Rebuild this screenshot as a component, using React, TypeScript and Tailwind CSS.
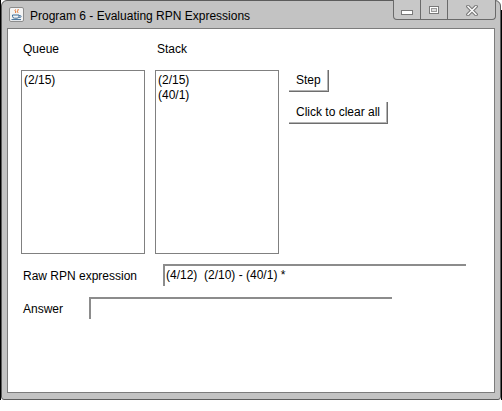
export default function App() {
  const font = { fontFamily: '"Liberation Sans", Arial, sans-serif' };
  return (
    <div className="w-[502px] h-[411px] bg-white flex text-black text-[12px] leading-[15px]" style={font}>
      {/* desktop edge */}
      <div className="w-px h-[400px] bg-black" />

      {/* window */}
      <div className="w-[500px] h-[400px] flex flex-col bg-[#c3c3c3] border border-[#5c5c5c] rounded-t-[6px] rounded-b-[3px]">
        {/* title bar */}
        <div className="h-[27px] flex items-start">
          <div className="ml-[7px] mt-[6px] w-[15px] h-[15px]">
            <svg width="15" height="15" viewBox="0 0 15 15">
              <rect x="0.5" y="0.5" width="14" height="14" rx="1.5" fill="#f4f4f4" stroke="#8c8c8c" />
              <path d="M6.5 2.5c-1.5 1.2 1.2 1.8 0 3.4" stroke="#e2661b" strokeWidth="1" fill="none" />
              <path d="M8.8 2c1.6 1-1.6 2 0.2 3.8" stroke="#e2661b" strokeWidth="1" fill="none" />
              <path d="M3.5 8h6.5v1.2a2 2 0 0 1-2 2H5.5a2 2 0 0 1-2-2z" fill="none" stroke="#3e6d98" strokeWidth="1" />
              <path d="M10 8.6h1.2a0.9 0.9 0 0 1 0 1.8H10" fill="none" stroke="#3e6d98" strokeWidth="0.9" />
              <path d="M2.5 12.6h9.5" stroke="#3e6d98" strokeWidth="1" />
            </svg>
          </div>
          <span className="ml-[6px] mt-[8px] whitespace-nowrap">Program 6 - Evaluating RPN Expressions</span>

          {/* caption buttons */}
          <div className="ml-auto mr-[4px] -mt-px h-[20px] flex border-l border-r border-b border-[#6a6a6a] rounded-b-[4px] bg-[#c8c8c8]">
            <div className="w-[27px] h-full border-r border-[#6a6a6a] flex justify-center">
              <div className="mt-[10px] w-[12px] h-[5px] border border-[#7a7a7a] bg-white" />
            </div>
            <div className="w-[27px] h-full border-r border-[#6a6a6a] flex justify-center">
              <div className="mt-[6px] w-[10px] h-[8px] border border-[#7a7a7a] bg-white flex justify-center">
                <div className="mt-[1px] w-[6px] h-[4px] border border-[#9a9a9a] bg-[#dedede]" />
              </div>
            </div>
            <div className="w-[47px] h-full flex justify-center">
              <svg className="mt-[5px]" width="12" height="11" viewBox="0 0 12 11">
                <path d="M2 1.5L10 9.5M10 1.5L2 9.5" stroke="#7a7a7a" strokeWidth="3.6" strokeLinecap="square" />
                <path d="M2 1.5L10 9.5M10 1.5L2 9.5" stroke="#ffffff" strokeWidth="1.4" strokeLinecap="square" />
              </svg>
            </div>
          </div>
        </div>

        {/* content pane */}
        <div className="mx-[5px] mb-[6px] flex-1 bg-white border border-[#7c7c7c] flex flex-col pl-[13px]">
          {/* labels */}
          <div className="mt-[13px] flex gap-[10px]">
            <div className="w-[124px] pl-[2px]">Queue</div>
            <div className="w-[124px] pl-[2px]">Stack</div>
          </div>

          {/* lists and buttons */}
          <div className="mt-[13px] flex gap-[10px]">
            <div className="w-[124px] h-[184px] border border-[#808080] pl-[2px] pt-[2px]">
              <div>(2/15)</div>
            </div>
            <div className="w-[124px] h-[184px] border border-[#808080] pl-[2px] pt-[2px]">
              <div>(2/15)</div>
              <div>(40/1)</div>
            </div>
            <div className="flex flex-col items-start gap-[10px]">
              <button className="h-[22px] px-[7px] bg-white border-r border-b border-[#6e6e6e] shadow-[inset_-1px_-1px_0_#b4b4b4] leading-[21px]">
                Step
              </button>
              <button className="h-[22px] px-[7px] bg-white border-r border-b border-[#6e6e6e] shadow-[inset_-1px_-1px_0_#b4b4b4] leading-[21px] whitespace-nowrap">
                Click to clear all
              </button>
            </div>
          </div>

          {/* raw expression */}
          <div className="mt-[10px] flex items-start">
            <div className="w-[142px] pl-[2px] pt-[5px]">Raw RPN expression</div>
            <div className="w-[303px] h-[22px] border-t-2 border-l-2 border-[#8c8c8c] pl-[1px] pt-[2px] whitespace-pre">
              (4/12)  (2/10) - (40/1) *
            </div>
          </div>

          {/* answer */}
          <div className="mt-[11px] flex items-start">
            <div className="w-[68px] pl-[2px] pt-[5px]">Answer</div>
            <div className="w-[303px] h-[22px] border-t-2 border-l-2 border-[#8c8c8c]" />
          </div>
        </div>
      </div>

      <div className="w-px h-[390px] mt-[10px] bg-black" />
    </div>
  );
}
